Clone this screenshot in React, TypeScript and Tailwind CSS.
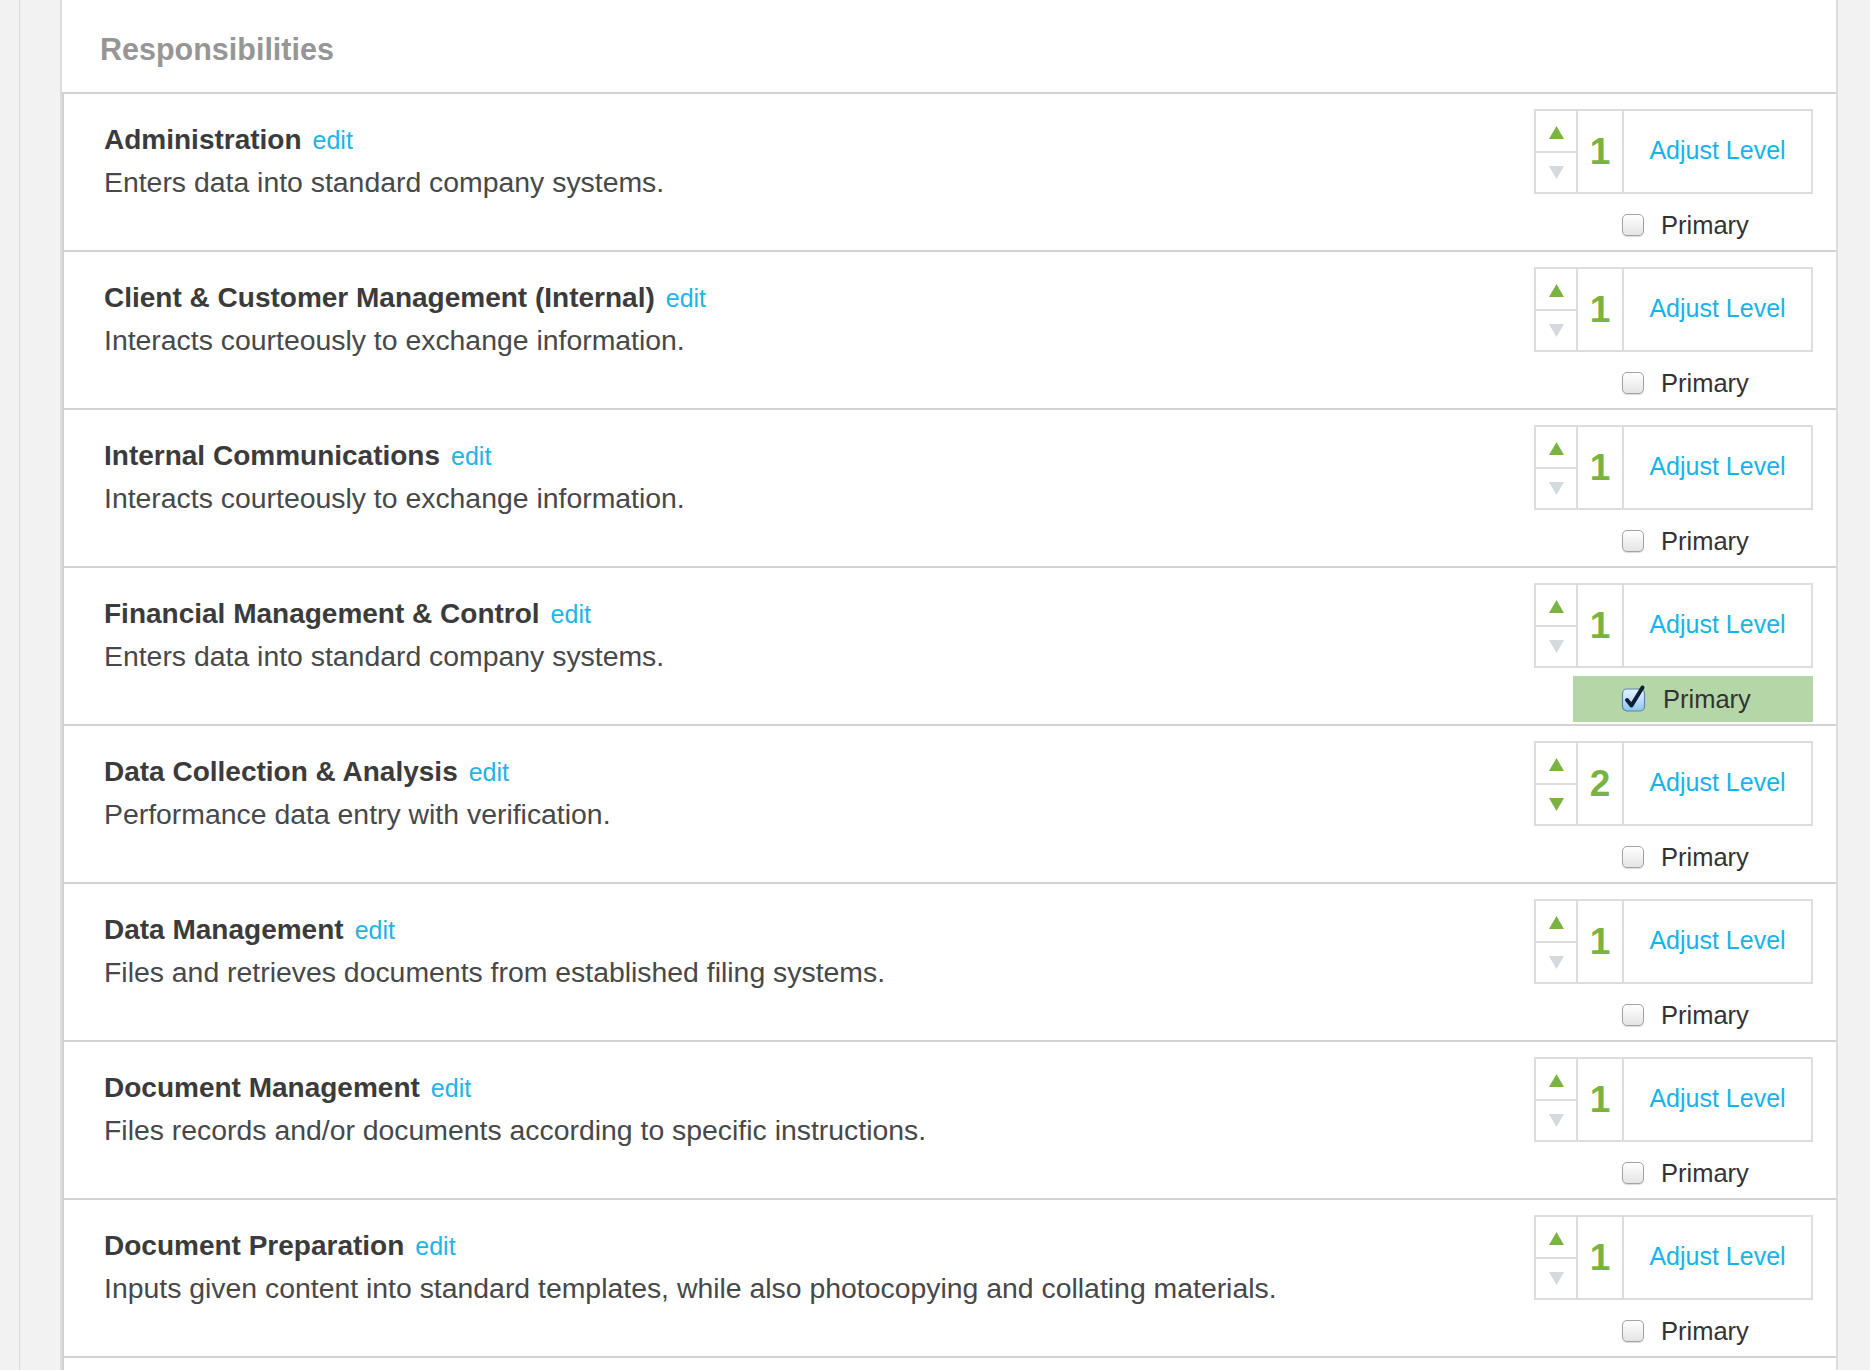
import React from "react";

type Item = {
  title: string;
  desc: string;
  level: number;
  primary?: boolean;
};

const items: Item[] = [
  { title: "Administration", desc: "Enters data into standard company systems.", level: 1 },
  { title: "Client & Customer Management (Internal)", desc: "Interacts courteously to exchange information.", level: 1 },
  { title: "Internal Communications", desc: "Interacts courteously to exchange information.", level: 1 },
  { title: "Financial Management & Control", desc: "Enters data into standard company systems.", level: 1, primary: true },
  { title: "Data Collection & Analysis", desc: "Performance data entry with verification.", level: 2 },
  { title: "Data Management", desc: "Files and retrieves documents from established filing systems.", level: 1 },
  { title: "Document Management", desc: "Files records and/or documents according to specific instructions.", level: 1 },
  { title: "Document Preparation", desc: "Inputs given content into standard templates, while also photocopying and collating materials.", level: 1 },
];

function Triangle({ up, active }: { up: boolean; active: boolean }) {
  const color = active ? "#7ab342" : "#d4d9dd";
  return (
    <svg width="15" height="13" viewBox="0 0 15 13">
      {up ? (
        <polygon points="7.5,0 15,13 0,13" fill={color} />
      ) : (
        <polygon points="0,0 15,0 7.5,13" fill={color} />
      )}
    </svg>
  );
}

function Checkbox({ checked }: { checked: boolean }) {
  if (checked) {
    return (
      <svg width="24" height="24" viewBox="0 0 24 24" className="overflow-visible">
        <defs>
          <linearGradient id="cbg" x1="0" y1="0" x2="0" y2="1">
            <stop offset="0" stopColor="#e6f3fd" />
            <stop offset="0.5" stopColor="#bfe0f8" />
            <stop offset="1" stopColor="#8cc4ee" />
          </linearGradient>
        </defs>
        <rect x="0.5" y="2" width="22" height="22" rx="4.5" fill="url(#cbg)" stroke="#5d86ad" strokeWidth="1.2" />
        <path d="M5 13 L9.5 18.5 L20.5 0.5" fill="none" stroke="#0e1d38" strokeWidth="4" strokeLinecap="round" strokeLinejoin="round" />
      </svg>
    );
  }
  return (
    <div className="w-[22px] h-[22px] rounded-[5px] border border-[#a3a3a3] bg-gradient-to-b from-white to-[#e4e4e4] shadow-[0_1px_1px_rgba(0,0,0,0.15)]" />
  );
}

function Row({ item }: { item: Item }) {
  return (
    <div className="flex border-b-2 border-[#d3d3d3]">
      <div className="flex-1 pl-[40px] pt-[29px]">
        <div className="flex items-baseline gap-[11px] leading-[34px]">
          <span className="text-[28px] font-bold text-[#3b3b3b]">{item.title}</span>
          <span className="text-[25px] text-[#22b4e6]">edit</span>
        </div>
        <div className="mt-[8px] text-[28.4px] leading-[34px] text-[#474849]">{item.desc}</div>
      </div>
      <div className="pr-[23px] pt-[15px] pb-[2px] flex flex-col items-end">
        <div className="w-[279px] h-[85px] border-2 border-[#dddddd] flex">
          <div className="w-[42px] border-r-2 border-[#dddddd] flex flex-col">
            <div className="h-[42px] border-b-2 border-[#dddddd] flex items-center justify-center pt-[2px]">
              <Triangle up active />
            </div>
            <div className="flex-1 flex items-center justify-center">
              <Triangle up={false} active={item.level > 1} />
            </div>
          </div>
          <div className="w-[46px] border-r-2 border-[#dddddd] flex items-center justify-center text-[37px] font-bold text-[#7ab342]">
            {item.level}
          </div>
          <div className="flex-1 flex items-center justify-center pb-[2px] text-[25px] text-[#17b3e8]">Adjust Level</div>
        </div>
        <div
          className={
            "mt-[8px] w-[240px] h-[46px] flex items-center pl-[49px] gap-[17px] " +
            (item.primary ? "bg-[#b5d7a7]" : "")
          }
        >
          <Checkbox checked={!!item.primary} />
          <span className="text-[25.5px] text-[#333333]">Primary</span>
        </div>
      </div>
    </div>
  );
}

export default function App() {
  return (
    <div className="flex min-h-[1370px] bg-[#f2f2f2] font-['Liberation_Sans',Arial,sans-serif]">
      <div className="w-[19px]" />
      <div className="w-[1px] bg-[#d9d9d9]" />
      <div className="w-[40px]" />
      <div className="flex-1 bg-white border-l-2 border-r-2 border-[#dcdcdc] flex flex-col">
        <div className="h-[94px] border-b-2 border-[#d3d3d3] flex items-center pl-[38px] pt-[7px]">
          <span className="text-[30.5px] font-bold text-[#969696]">Responsibilities</span>
        </div>
        <div className="flex-1 border-l-2 border-[#d2d2d2]">
          {items.map((it) => (
            <Row key={it.title} item={it} />
          ))}
          <div className="h-[200px]" />
        </div>
      </div>
      <div className="w-[32px]" />
    </div>
  );
}
